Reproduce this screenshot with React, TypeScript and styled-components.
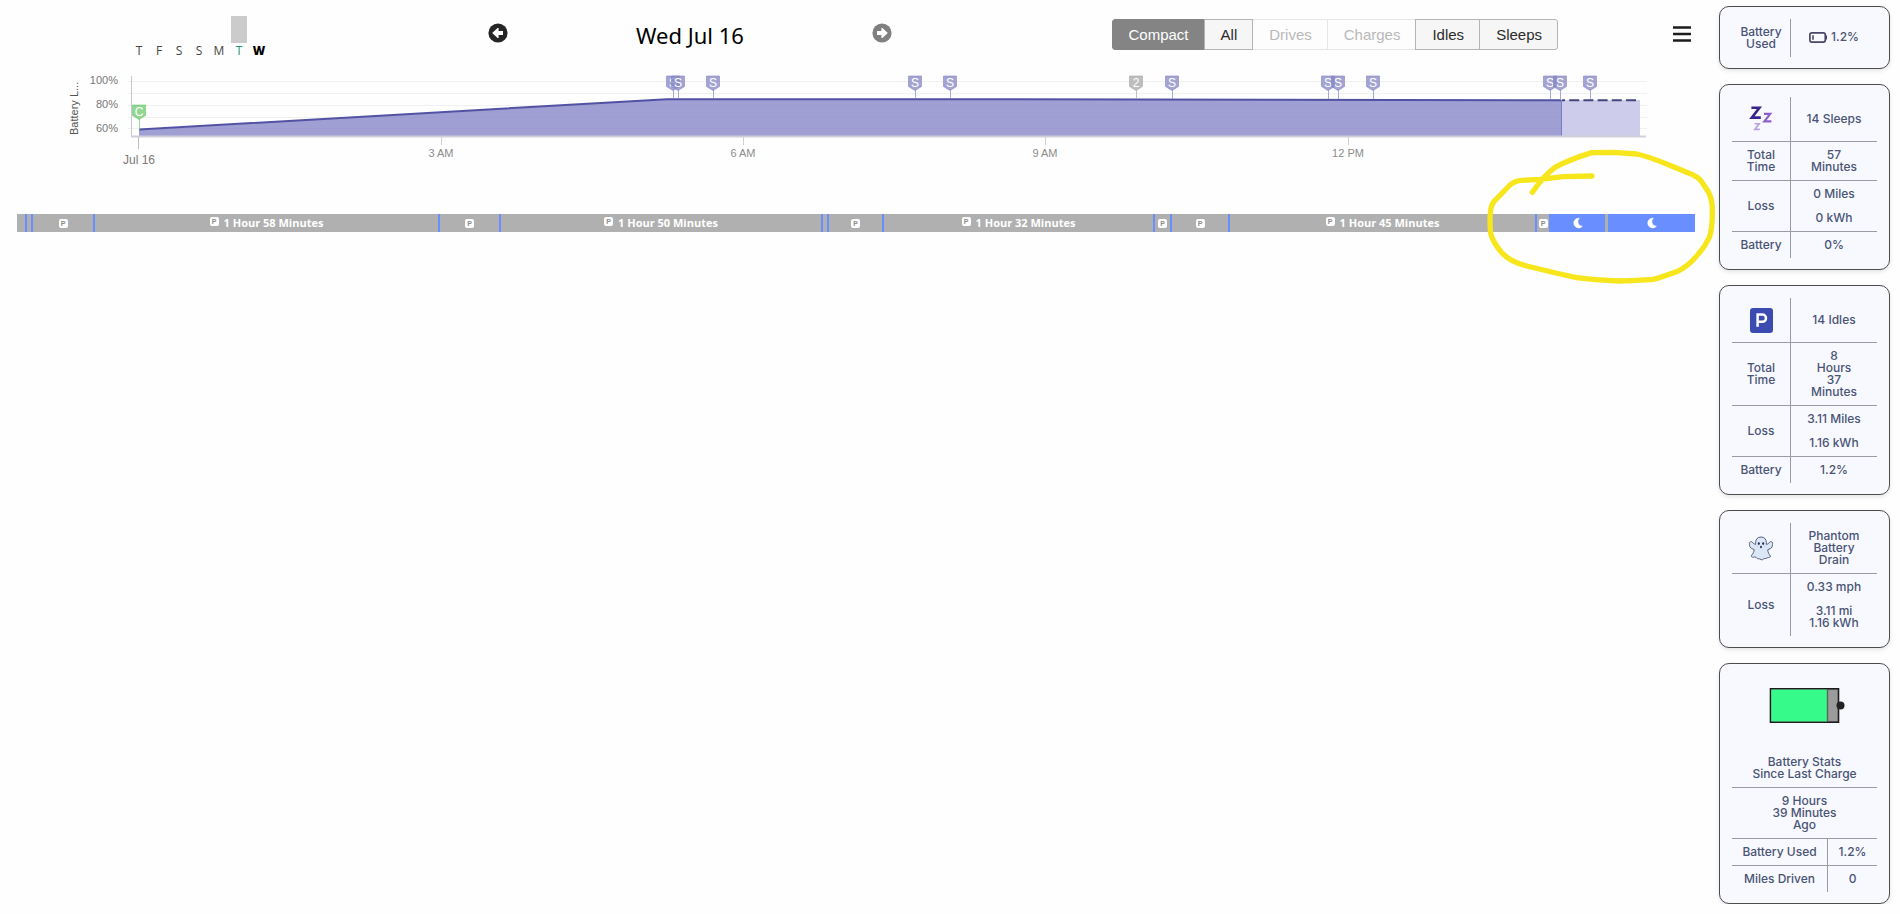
import React from "react";
import styled, { createGlobalStyle } from "styled-components";

const GlobalStyle = createGlobalStyle`
  *, *::before, *::after { box-sizing: border-box; }
  body {
    margin: 0;
    background: #fefefe;
    color: #000;
    font-family: "Liberation Sans", Arial, sans-serif;
  }
`;

/* ---------- page ---------- */

const Page = styled.div`
  display: flex;
  align-items: flex-start;
`;

const Main = styled.main`
  flex: 1;
  min-width: 0;
  padding: 0 24px 0 17px;
`;

const Sidebar = styled.aside`
  flex: none;
  display: flex;
  flex-direction: column;
  gap: 15px;
  width: 181px;
  padding: 6px 10px 0 0;
`;

/* ---------- header ---------- */

const Header = styled.header`
  display: grid;
  grid-template-columns: minmax(0, 471fr) minmax(0, 404fr) minmax(0, 667fr) minmax(0, 136fr);
  height: 76px;
`;

const WeekStrip = styled.div`
  display: flex;
  gap: 4px;
  margin-left: 114px;
  padding-top: 16px;
`;

const Day = styled.div<{ $tone: string; $bold?: boolean }>`
  display: flex;
  flex-direction: column;
  align-items: center;
  width: 16px;
  color: ${(p) => p.$tone};
  font: ${(p) => (p.$bold ? 800 : 400)} 12px/16px "Open Sans", sans-serif;
`;

const DayBar = styled.div<{ $filled?: boolean }>`
  width: 16px;
  height: 27px;
  background: ${(p) => (p.$filled ? "#cbcbcb" : "transparent")};
`;

const DateNav = styled.nav`
  display: flex;
  align-items: flex-start;
  justify-content: space-between;
  padding-top: 18px;
`;

const IconButton = styled.button`
  display: flex;
  padding: 0;
  border: 0;
  background: none;
  color: inherit;
  cursor: pointer;
`;

const NavButton = styled(IconButton)<{ $muted?: boolean }>`
  padding: 5px 0;
  color: ${(p) => (p.$muted ? "#808080" : "#262626")};
`;

const DateTitle = styled.h1`
  margin: 0;
  font: 400 22px/34px "Noto Sans", sans-serif;
`;

const Filters = styled.div`
  display: flex;
  justify-self: end;
  margin: 19px 1px 0 0;
  height: 31px;
`;

const FilterButton = styled.button<{ $active?: boolean }>`
  margin-left: -1px;
  padding: 0 15px 0 16px;
  border: 1px solid ${(p) => (p.$active ? "#848484" : "#b4b4b4")};
  background: ${(p) => (p.$active ? "#848484" : "#f6f6f6")};
  color: ${(p) => (p.$active ? "#fff" : "#2b2b2b")};
  font: 400 15px/20px "Liberation Sans", Arial, sans-serif;
  &:first-child { margin-left: 0; border-radius: 3px 0 0 3px; }
  &:last-child { border-radius: 0 3px 3px 0; }
  &:disabled {
    border-color: #e6e6e6;
    background: #fdfdfd;
    color: #b9b9b9;
  }
  &:not(:disabled) { position: relative; }
`;

const MenuButton = styled(IconButton)`
  justify-self: end;
  align-self: start;
  margin: 26px 4px 0 0;
`;

/* ---------- chart ---------- */

const ChartSvg = styled.svg`
  display: block;
  width: 100%;
  height: auto;
  overflow: visible;
  font-family: "Liberation Sans", Arial, sans-serif;
`;

/* ---------- timeline ---------- */

const Timeline = styled.section`
  position: relative;
  display: flex;
  height: 18px;
  margin-top: 38px;
`;

const Segment = styled.div<{ $sleep: boolean; $span: number }>`
  display: flex;
  flex: ${(p) => p.$span} 1 0;
  align-items: center;
  justify-content: center;
  gap: 5px;
  min-width: 0;
  overflow: hidden;
  background: ${(p) => (p.$sleep ? "#698eff" : "#b0b0b0")};
  color: #fff;
  font: 700 11px/18px "Open Sans", sans-serif;
  white-space: nowrap;
`;

const ParkBadge = styled.span<{ $raised?: boolean }>`
  flex: none;
  width: 9px;
  height: 9px;
  margin-bottom: ${(p) => (p.$raised ? 4 : 0)}px;
  border-radius: 2px;
  background: #fff;
  color: #8c8c8c;
  font: 700 7px/9px "Liberation Sans", Arial, sans-serif;
  text-align: center;
`;

const Highlight = styled.svg`
  position: absolute;
  top: -74px;
  right: -25px;
  width: 260px;
  height: 150px;
  pointer-events: none;
`;

/* ---------- cards ---------- */

const Card = styled.section`
  padding: 12px 12px 11px;
  border: 1px solid #4d4d4d;
  border-radius: 10px;
  background: #f8f9fe;
  box-shadow: 0 2px 4px rgba(0, 0, 0, 0.1);
`;

const Stats = styled.table`
  width: 100%;
  table-layout: fixed;
  border-collapse: separate;
  border-spacing: 0;
  color: #4a5476;
  font: 500 12px/12px Inter, sans-serif;
  text-align: center;
  tr:last-child > * { border-bottom: 0; }
`;

const Label = styled.th`
  padding: 7px 0;
  border-right: 1px solid #9a9aa2;
  border-bottom: 1px solid #9a9aa2;
  font-weight: inherit;
  white-space: pre-line;
`;

const Value = styled.td<{ $tall?: boolean }>`
  height: ${(p) => (p.$tall ? "45px" : "auto")};
  padding: 7px 0;
  border-bottom: 1px solid #9a9aa2;
  white-space: pre-line;
`;

const IconSlot = styled.span`
  display: flex;
  justify-content: center;
`;

const Inline = styled.span`
  display: inline-flex;
  align-items: center;
  gap: 4px;
`;

const BatteryArt = styled.svg`
  display: block;
  overflow: visible;
  margin: 12px auto 32px;
`;

const SummaryCell = styled(Value)`
  padding-top: 0;
`;

/* ---------- icons ---------- */

function CircleArrow({ flip }: { flip?: boolean }) {
  return (
    <svg width="20" height="20" viewBox="0 0 20 20" aria-hidden="true">
      <circle cx="10" cy="10" r="9.6" fill="currentColor" />
      <path
        d="M4.2 10 9.6 4.9H10.6V8H15V12H10.6V15.1H9.6Z"
        fill="#fff"
        transform={flip ? "rotate(180 10 10)" : undefined}
      />
    </svg>
  );
}

function Moon() {
  return (
    <svg width="9" height="10" viewBox="0 0 9 10" overflow="visible" aria-hidden="true">
      <path d="M6.4 0.2A4.9 4.9 0 1 0 9.4 8.2A4.6 4.6 0 0 1 6.4 0.2Z" fill="#fff" stroke="#fff" strokeWidth="0.5" />
    </svg>
  );
}

function SleepIcon() {
  return (
    <svg width="24" height="26" viewBox="0 0 24 26" fill="none" strokeLinejoin="miter" aria-hidden="true">
      <path d="M2.4 1.8H10.4L2.8 11.6H11.8" stroke="#39248f" strokeWidth="2.6" />
      <path d="M15 7.8H21.2L15.4 15.4H22.4" stroke="#8c60c8" strokeWidth="2.2" />
      <path d="M5.6 17.8H10.2L5.8 23.4H10.8" stroke="#b9a0e2" strokeWidth="1.6" />
    </svg>
  );
}

function ParkIcon() {
  return (
    <svg width="23" height="25" viewBox="0 0 23 25" aria-hidden="true">
      <rect width="23" height="25" rx="3" fill="#3c4bb2" />
      <path d="M7.6 18.8V6.6H12.4A3.5 3.5 0 0 1 12.4 13.8H7.6" fill="none" stroke="#fff" strokeWidth="2.5" />
    </svg>
  );
}

function GhostIcon() {
  return (
    <svg width="26" height="25" viewBox="0 0 26 25" aria-hidden="true">
      <path
        d="M13 1C9.6 1 7.6 3.4 7.6 6.6V8.4C6.4 8.2 5.2 7.4 4.4 6.2C3.4 5 1 6 1.4 7.6C2 9.2 1 9.8 2.2 11.2C3.6 12.8 5 13 6.2 13.6C6.2 16 4.8 17.6 3.4 19.6C3 20.6 4 21.4 5.4 21.2C7 20.8 8 21 8.8 22.2C9.8 23.2 11 22.4 12 23C13.4 24.2 14.6 24 15.4 23C16.4 22 17.6 23 18.8 22.2C20 21 21 21.8 22.2 21C23 20.2 21.6 19 20.8 17.6C20 16.2 19.8 15 19.8 13.6C21.4 13 23 12.6 24 11C25 9.6 24 9 24.6 7.6C25 6 22.8 5 21.6 6.2C20.8 7.4 19.6 8.2 18.4 8.4V6.6C18.4 3.4 16.4 1 13 1Z"
        fill="#dbe6f6"
        stroke="#46506c"
        strokeWidth="0.9"
      />
      <ellipse cx="10.8" cy="7.6" rx="1" ry="1.3" fill="#1d2950" />
      <ellipse cx="15.2" cy="7.6" rx="1" ry="1.3" fill="#1d2950" />
      <ellipse cx="13" cy="11" rx="0.9" ry="1.3" fill="#1d2950" />
      <path d="M8.4 10.2H9.6M16.4 10.2H17.6" stroke="#d8a8c4" strokeWidth="0.8" />
    </svg>
  );
}

function SmallBattery() {
  return (
    <svg width="18" height="11" viewBox="0 0 18 11" fill="none" aria-hidden="true">
      <rect x="0.9" y="0.9" width="15.4" height="9.2" rx="2" stroke="#4b4668" strokeWidth="1.7" />
      <path d="M4 3.2V7.8" stroke="#4b4668" strokeWidth="1.6" />
      <path d="M17.3 3.6V7.4" stroke="#4b4668" strokeWidth="1.4" />
    </svg>
  );
}

/* ---------- data ---------- */

const days = [
  { letter: "T", tone: "#444" },
  { letter: "F", tone: "#444" },
  { letter: "S", tone: "#444" },
  { letter: "S", tone: "#444" },
  { letter: "M", tone: "#444" },
  { letter: "T", tone: "#1f9478", filled: true },
  { letter: "W", tone: "#000", bold: true },
];

const filters = [
  { name: "Compact", active: true },
  { name: "All" },
  { name: "Drives", disabled: true },
  { name: "Charges", disabled: true },
  { name: "Idles" },
  { name: "Sleeps" },
];

type Slice = { span: number; sleep?: boolean; icon?: boolean; text?: string };

const slices: Slice[] = [
  { span: 8 },
  { span: 2, sleep: true },
  { span: 4 },
  { span: 2, sleep: true },
  { span: 60, icon: true },
  { span: 2, sleep: true },
  { span: 343, icon: true, text: "1 Hour 58 Minutes" },
  { span: 2, sleep: true },
  { span: 59, icon: true },
  { span: 2, sleep: true },
  { span: 320, icon: true, text: "1 Hour 50 Minutes" },
  { span: 2, sleep: true },
  { span: 4 },
  { span: 2, sleep: true },
  { span: 53, icon: true },
  { span: 2, sleep: true },
  { span: 269, icon: true, text: "1 Hour 32 Minutes" },
  { span: 2, sleep: true },
  { span: 15, icon: true },
  { span: 2, sleep: true },
  { span: 56, icon: true },
  { span: 2, sleep: true },
  { span: 305, icon: true, text: "1 Hour 45 Minutes" },
  { span: 2, sleep: true },
  { span: 12, icon: true },
  { span: 56, sleep: true, icon: true },
  { span: 3 },
  { span: 87, sleep: true, icon: true },
];

const sleepMarkers = [656, 661, 696, 898, 933, 1155, 1311, 1321, 1356, 1533, 1543, 1573];

/* ---------- chart ---------- */

function Marker({ x, y, letter, color, stem }: { x: number; y: number; letter: string; color: string; stem: number }) {
  return (
    <g>
      <path d={`M${x + 0.5} ${y + 14}V${stem}`} stroke={color} strokeOpacity="0.7" />
      <path
        d={`M${x - 6.5} ${y}H${x + 6.5}V${y + 10.5}L${x} ${y + 14.5}L${x - 6.5} ${y + 10.5}Z`}
        fill={color}
        fillOpacity="0.75"
        stroke={color}
        strokeOpacity="0.6"
      />
      <text x={x} y={y + 11} fontSize="12" fill="#fff" textAnchor="middle">
        {letter}
      </text>
    </g>
  );
}

function BatteryChart() {
  const hours: [number, string][] = [
    [424, "3 AM"],
    [726, "6 AM"],
    [1028, "9 AM"],
    [1331, "12 PM"],
  ];
  return (
    <ChartSvg viewBox="0 0 1678 100" role="img" aria-label="Battery level">
      {[5, 17, 29, 41, 52].map((y) => (
        <path key={y} d={`M111 ${y + 0.5}H1630`} stroke="#f1f1f1" />
      ))}
      <path d="M122 54L650 23H920L1544 24V60H122Z" fill="#8787c9" fillOpacity="0.8" />
      <path d="M1544 24H1623V60H1544Z" fill="#cdcceb" />
      <path d="M122 53.5L650 23.2H920L1544 24.3" fill="none" stroke="#5252a4" strokeWidth="2" />
      <path d="M1544.5 24V60" stroke="#7a7acb" />
      <path d="M1545 24.3H1620" stroke="#46467c" strokeWidth="2" strokeDasharray="10 4.2" strokeDashoffset="7" />
      <path d="M114.5 0V61" stroke="#c9c9c9" />
      <path d="M114 60.5H1629" stroke="#cfcfdb" strokeWidth="2" />
      <path d="M121.5 61V73" stroke="#bdbdbd" />
      {hours.map(([x, name]) => (
        <g key={name}>
          <path d={`M${x + 0.5} 61V69`} stroke="#d0d0d0" />
          <text x={x} y="81" fontSize="11" fill="#8c8c8c" textAnchor="middle">
            {name}
          </text>
        </g>
      ))}
      <text x="122" y="88" fontSize="12" fill="#7a7a7a" textAnchor="middle">
        Jul 16
      </text>
      {["100%", "80%", "60%"].map((name, i) => (
        <text key={name} x="101" y={8 + i * 24} fontSize="11" fill="#777" textAnchor="end">
          {name}
        </text>
      ))}
      <text transform="translate(61 59) rotate(-90)" fontSize="11" fill="#555">
        Battery L...
      </text>
      <Marker x={122} y={29} letter="C" color="#6cc96f" stem={54} />
      {sleepMarkers.map((x) => (
        <Marker key={x} x={x} y={0} letter="S" color="#8686c4" stem={23} />
      ))}
      <Marker x={1119} y={0} letter="2" color="#a8a8a8" stem={23} />
    </ChartSvg>
  );
}

/* ---------- card contents ---------- */

type Row = { label: React.ReactNode; value: React.ReactNode; tall?: boolean };

function StatCard({ rows }: { rows: Row[] }) {
  return (
    <Card>
      <Stats>
        <colgroup>
          <col style={{ width: "59px" }} />
          <col />
        </colgroup>
        <tbody>
          {rows.map((row, i) => (
            <tr key={i}>
              <Label scope="row">{row.label}</Label>
              <Value $tall={row.tall}>{row.value}</Value>
            </tr>
          ))}
        </tbody>
      </Stats>
    </Card>
  );
}

export default function App() {
  return (
    <>
      <GlobalStyle />
      <Page>
        <Main>
          <Header>
            <WeekStrip>
              {days.map((d, i) => (
                <Day key={i} $tone={d.tone} $bold={d.bold}>
                  <DayBar $filled={d.filled} />
                  {d.letter}
                </Day>
              ))}
            </WeekStrip>
            <DateNav aria-label="Day">
              <NavButton aria-label="Previous day">
                <CircleArrow />
              </NavButton>
              <DateTitle>Wed Jul 16</DateTitle>
              <NavButton $muted aria-label="Next day">
                <CircleArrow flip />
              </NavButton>
            </DateNav>
            <Filters>
              {filters.map((f) => (
                <FilterButton key={f.name} $active={f.active} disabled={f.disabled}>
                  {f.name}
                </FilterButton>
              ))}
            </Filters>
            <MenuButton aria-label="Menu">
              <svg width="18" height="17" viewBox="0 0 18 17" aria-hidden="true">
                <path d="M0 1.5H18M0 8H18M0 14.5H18" stroke="#1c1c1c" strokeWidth="2.4" />
              </svg>
            </MenuButton>
          </Header>
          <BatteryChart />
          <Timeline aria-label="Activity timeline">
            {slices.map((s, i) => (
              <Segment key={i} $sleep={!!s.sleep} $span={s.span}>
                {s.icon && (s.sleep ? <Moon /> : <ParkBadge $raised={!!s.text}>P</ParkBadge>)}
                {s.text}
              </Segment>
            ))}
            <Highlight viewBox="0 0 780 450" aria-hidden="true">
              <path
                d="M217 157Q250 108 285 82Q325 60 395 38L460 37L530 42Q560 48 620 72L680 97Q715 110 725 125L745 155Q758 180 757 215Q757 270 748 292Q735 320 715 342Q690 375 655 393Q610 410 580 418Q530 422 480 423Q400 420 350 413L300 402L200 378Q150 365 125 338Q98 305 92 280Q88 240 92 210Q95 190 108 178L150 135Q165 122 185 121L240 118L310 110L396 108"
                fill="none"
                stroke="#f8e61c"
                strokeWidth="16"
                strokeLinecap="round"
                strokeLinejoin="round"
              />
            </Highlight>
          </Timeline>
        </Main>

        <Sidebar>
          <StatCard
            rows={[
              {
                label: "Battery\nUsed",
                value: (
                  <Inline>
                    <SmallBattery />
                    1.2%
                  </Inline>
                ),
              },
            ]}
          />
          <StatCard
            rows={[
              { label: <IconSlot><SleepIcon /></IconSlot>, value: "14 Sleeps", tall: true },
              { label: "Total\nTime", value: "57\nMinutes" },
              { label: "Loss", value: "0 Miles\n\n0 kWh" },
              { label: "Battery", value: "0%" },
            ]}
          />
          <StatCard
            rows={[
              { label: <IconSlot><ParkIcon /></IconSlot>, value: "14 Idles", tall: true },
              { label: "Total\nTime", value: "8\nHours\n37\nMinutes" },
              { label: "Loss", value: "3.11 Miles\n\n1.16 kWh" },
              { label: "Battery", value: "1.2%" },
            ]}
          />
          <StatCard
            rows={[
              { label: <IconSlot><GhostIcon /></IconSlot>, value: "Phantom\nBattery\nDrain" },
              { label: "Loss", value: "0.33 mph\n\n3.11 mi\n1.16 kWh" },
            ]}
          />
          <Card>
            <Stats>
              <colgroup>
                <col style={{ width: "96px" }} />
                <col />
              </colgroup>
              <tbody>
                <tr>
                  <SummaryCell colSpan={2}>
                    <BatteryArt width="72" height="36" viewBox="0 0 72 36" aria-hidden="true">
                      <rect x="1.5" y="0.8" width="68" height="33.4" fill="#9b9b9b" stroke="#1c1c1c" strokeWidth="1.6" />
                      <rect x="2.3" y="1.6" width="55.7" height="31.8" fill="#36fa8a" />
                      <path d="M58.5 1.6V33.4" stroke="#566a5c" strokeWidth="1.4" />
                      <circle cx="71.5" cy="17.5" r="4" fill="#222" />
                    </BatteryArt>
                    {"Battery Stats\nSince Last Charge"}
                  </SummaryCell>
                </tr>
                <tr>
                  <Value colSpan={2}>{"9 Hours\n39 Minutes\nAgo"}</Value>
                </tr>
                <tr>
                  <Label scope="row">Battery Used</Label>
                  <Value>1.2%</Value>
                </tr>
                <tr>
                  <Label scope="row">Miles Driven</Label>
                  <Value>0</Value>
                </tr>
              </tbody>
            </Stats>
          </Card>
        </Sidebar>
      </Page>
    </>
  );
}
